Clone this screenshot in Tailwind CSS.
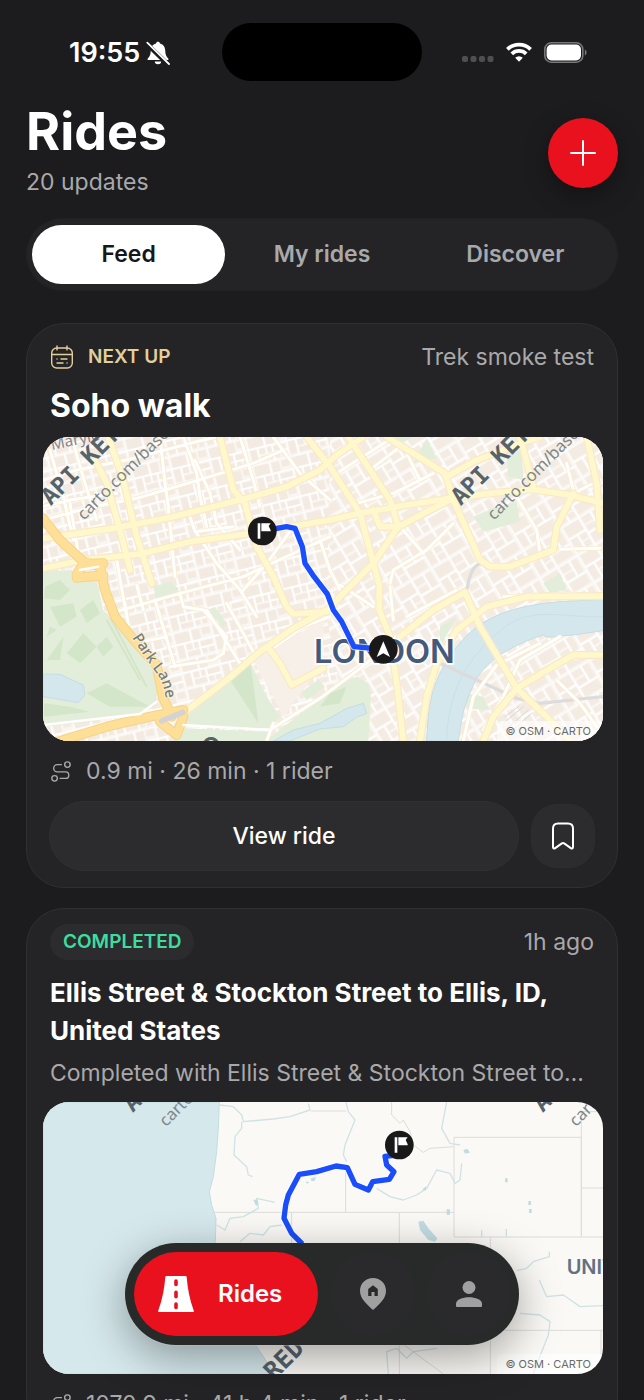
<!DOCTYPE html>
<html lang="en">
<head>
<meta charset="utf-8">
<meta name="viewport" content="width=device-width, initial-scale=1">
<title>Rides</title>
<script src="https://cdn.jsdelivr.net/npm/@tailwindcss/browser@4"></script>
</head>
<body class="bg-[#1c1c1e]">
<svg width="0" height="0" class="absolute" aria-hidden="true">
  <defs>
    <g id="flag-pin">
      <circle r="43" fill="#191919"/>
      <path d="M-14-23h8v46h-8zM-3-23H25l-6 8 6 13v3H-3z" fill="#fff"/>
    </g>
    <g id="watermark">
      <text transform="translate(32 229) rotate(-45)" font-family="DejaVu Sans Mono, monospace" font-weight="700" font-size="71" fill="#56636b">API KEY</text>
      <text transform="translate(132 272) rotate(-45)" font-family="Noto Sans, sans-serif" font-size="50" fill="#7d868b">carto.com/basemaps</text>
    </g>
    <symbol id="route" viewBox="0 0 24 24">
      <g fill="none" stroke="currentColor" stroke-width="1.5" stroke-linecap="round">
        <circle cx="19" cy="5" r="3"/><circle cx="5" cy="20" r="3"/>
        <path d="M12.500 5H8a4 4 0 0 0 0 8h9a3.500 3.500 0 0 1 0 7h-6"/>
      </g>
    </symbol>
  </defs>
</svg>

<div class="relative flex h-screen flex-col overflow-hidden bg-[#1c1c1e] font-['Inter',sans-serif] text-white">
  <!-- Status bar -->
  <div class="grid h-[102px] shrink-0 grid-cols-[1fr_200px_1fr] pt-[23px]">
    <div class="flex h-[60px] items-center gap-1.5 pl-[69px]">
      <span class="text-[27px] leading-8 font-semibold">19:55</span>
      <svg class="size-6 shrink-0" viewBox="0 0 24 24" fill="#fff" aria-label="Silent mode">
        <path d="M12 .8c1 0 1.800.7 2 1.600 3.500.8 5 3.600 5.200 7 .2 4 1 5.800 3 8 .6.800.3 1.600-.7 1.600H2.500c-1 0-1.300-.8-.7-1.600 2-2.200 2.800-4 3-8 .2-3.400 1.700-6.200 5.200-7 .2-.9 1-1.600 2-1.600z"/>
        <path d="M8.800 20.500h6.400a3.200 2.800 0 0 1-6.400 0z"/>
        <path d="M.5 2.500 22.500 24" stroke="#1c1c1e" stroke-width="4.500"/>
        <path d="M1.300 1.600 23 23" stroke="#fff" stroke-width="1.800" stroke-linecap="round"/>
      </svg>
    </div>
    <div class="h-[58px] rounded-full bg-black"></div>
    <div class="flex h-[58px] items-center justify-end pr-14">
      <svg class="mt-3.5 h-1.5 w-8" viewBox="0 0 32 6" fill="#4f4f51"><rect width="6" height="6" rx="2"/><rect x="8.500" width="6" height="6" rx="2"/><rect x="17" width="6" height="6" rx="2"/><rect x="25.500" width="6" height="6" rx="2"/></svg>
      <svg class="ml-3 h-5 w-[26px]" viewBox="0 0 26 20" fill="none" stroke="#fff" stroke-width="3.800">
        <path d="M1.400 7.300a16.500 16.500 0 0 1 23.200 0"/><path d="M5.800 11.800a10.300 10.300 0 0 1 14.400 0"/>
        <path d="M13 19.700l-3.800-4a5.500 5.500 0 0 1 7.600 0z" fill="#fff" stroke="none"/>
      </svg>
      <svg class="ml-3 h-[21px] w-11" viewBox="0 0 44 21">
        <rect x=".8" y=".8" width="38" height="19.400" rx="6.500" fill="none" stroke="#77777a" stroke-width="1.600"/>
        <rect x="2.600" y="2.600" width="34.400" height="15.800" rx="4.800" fill="#fff"/>
        <path d="M40.800 7.500c2.400.7 2.400 5.300 0 6z" fill="#77777a"/>
      </svg>
    </div>
  </div>

  <main class="flex flex-col px-[26px]">
    <header class="flex items-center justify-between">
      <div class="pb-2">
        <h1 class="text-[52px] leading-[60px] font-bold">Rides</h1>
        <p class="mt-1.5 text-[23px] leading-7 text-[#a9a9ab]">20 updates</p>
      </div>
      <button type="button" aria-label="New ride" class="flex size-[70px] items-center justify-center rounded-full bg-[#e8111d] shadow-[0_8px_24px_rgba(0,0,0,0.35)]">
        <svg class="size-7" viewBox="0 0 28 28" stroke="#fff" stroke-width="2" stroke-linecap="round"><path d="M14 2v24M2 14h24"/></svg>
      </button>
    </header>

    <div role="tablist" class="mt-3.5 grid h-[73px] grid-cols-3 rounded-full border border-[#222224] bg-[#242426] px-[5px] py-1.5 text-[23px] font-semibold text-[#a9a9ab]">
      <button type="button" role="tab" aria-selected="true" class="rounded-full bg-white text-[#171719]">Feed</button>
      <button type="button" role="tab" aria-selected="false">My rides</button>
      <button type="button" role="tab" aria-selected="false">Discover</button>
    </div>

    <div class="mt-8 flex flex-col gap-5">
      <article class="rounded-[38px] border border-[#303032] bg-[#242426] pt-[15px] pb-4">
        <div class="flex h-9 items-center px-[23px]">
          <svg class="size-6" viewBox="0 0 24 24" fill="none" stroke="#e3cf9d" stroke-width="1.400" stroke-linecap="round">
            <rect x="1.700" y="3" width="20.600" height="20" rx="5"/><path d="M7 .9v4M17 .9v4M1.700 9.500h20.600M7 14h.1M11 14h6M7 18h6M17 18h.1"/>
          </svg>
          <span class="ml-3.5 text-[19px] font-semibold text-[#e3cf9d]">NEXT UP</span>
          <span class="ml-auto text-[23px] text-[#a9a9ab]">Trek smoke test</span>
        </div>
        <h2 class="mt-[13px] px-[23px] text-[32px] leading-9 font-bold">Soho walk</h2>
        <div class="relative mt-[13px] mr-3.5 ml-4 h-[304px] overflow-hidden rounded-[26px] bg-[#f8f4ee]">
          <svg class="size-full" viewBox="9 21 1680 912" preserveAspectRatio="xMidYMid slice" role="img" aria-label="Map of the Soho walk route">
            <defs>
              <pattern id="blocks-a" width="118" height="86" patternUnits="userSpaceOnUse" patternTransform="rotate(-14)">
                <rect width="118" height="86" fill="#f9f6f1"/>
                <path d="M5 5h46v30H5zM58 5h24v32H58zM89 5h24v20H89zM5 42h20v38H5zM32 42h38v17H32zM32 66h38v14H32zM77 44h36v15H77zM77 66h14v14H77zM98 66h15v14H98z" fill="#f3eae1"/>
                <path d="M0 0h118M0 0v86M54 0v62M29 38v48M73 38v48M0 38h118M73 62h45" stroke="#fff" stroke-width="5"/>
              </pattern>
              <pattern id="blocks-b" width="132" height="96" patternUnits="userSpaceOnUse" patternTransform="rotate(-31)">
                <rect width="132" height="96" fill="#f9f6f1"/>
                <path d="M6 6h52v34H6zM67 6h30v20H67zM67 34h30v18H67zM105 6h20v46h-20zM6 48h22v42H6zM36 48h22v18H36zM36 73h22v17H36zM67 60h58v30H67z" fill="#f4ece3"/>
                <path d="M0 0h132M0 0v96M62 0v96M101 0v56M0 44h62M62 56h70M32 44v52" stroke="#fff" stroke-width="5"/>
              </pattern>
              <g id="streets">
                <path d="M9 150 110 120 260 90 450 40 530 21M9 270 140 235 290 205 460 155 640 100 730 60M9 230 90 210 230 190M360 21 375 160 385 230 405 440M430 21 470 130 480 200 500 290M465 90 510 190 530 280 600 360M90 220 120 400M30 60 70 200 100 330M100 40 135 160 170 270M600 21 640 150 660 230M700 21 780 130 870 210M450 260 465 305 580 290M470 310 530 400 600 480 650 560M255 520 270 620M230 390 260 560M220 547 420 490 610 440 760 370 870 320M345 510 375 610 405 710M420 490 430 530 490 540 560 620 550 670 520 690 390 710M500 540 600 700M560 520 640 665M610 480 680 400 760 290M290 465 310 540M280 640 380 620"/>
                <path d="M840 330 870 420 900 480M950 220 1060 190 1180 130M890 130 1000 60 1060 21M990 120 1080 50M1100 70 1140 150M1080 290 1150 370M1050 460 1060 420 1160 360 1240 280M970 100 1050 200M1430 200 1490 300 1500 370M1560 358 1680 355M1580 100 1600 180M1600 190 1680 150M900 465 1000 530M1050 470 1060 570M1100 560 1250 480M1390 500 1600 490M1330 900 1390 800 1440 690 1560 620M1440 760 1560 690 1640 680M1550 750 1620 820 1670 890M690 900 840 805 980 700 1090 600M680 933 700 880M690 660 790 590 870 560M1270 933 1300 800 1370 705 1500 640"/>
              </g>
              <g id="avenues">
                <path d="M9 415 130 390 300 372 450 335 620 312 870 270 960 250 1100 225 1230 205 1350 190 1480 178 1590 195 1689 220"/>
                <path d="M9 325 220 295 380 265 460 245 620 205 740 170 840 120 890 75 970 21"/>
                <path d="M165 90 200 160 240 300 270 420M205 21 250 150 290 320 335 460M540 21 560 100 580 180 615 220 650 350 700 440 740 530 760 552 860 545M800 21 870 110 960 250 1000 400 1018 465 1018 540 1050 620 1070 760 1090 933"/>
                <path d="M430 850 560 750 660 665 760 595 870 535 900 500 1000 400 1075 290 1180 235 1240 205M925 21 1010 150 1050 210 1075 290 1020 290 1000 240M690 660 720 700 755 765 850 715M1040 21 1120 70 1215 130 1240 210 1320 390 1350 410 1410 410 1540 360 1550 290 1600 190M1220 140 1300 95 1440 40 1500 21M1440 21 1480 170M1640 21 1670 160 1680 300"/>
                <path d="M1140 933 1160 800 1190 700 1250 600 1340 530 1460 500 1689 498M1080 620 1180 540 1275 487 1320 590 1430 775 1520 860 1590 933M1430 775 1530 715 1600 675 1689 675M1430 775 1360 860 1330 933"/>
              </g>
              <g id="parklane">
                <path d="M9 265 60 330 130 395 180 410 195 480 225 560 290 640 350 705 368 800 395 860M60 933 200 890 330 860 430 840M110 433 130 402 190 400M110 443 190 436M360 875 410 915 430 860"/>
              </g>
            </defs>
            <path d="M9 21h1680v912H9z" fill="url(#blocks-a)"/>
            <path d="M870 21h819v912H930L860 560z" fill="url(#blocks-b)"/>
            <path d="M640 690 680 665 850 570 850 700 730 860z" fill="#f6f0e9"/>
            <!-- Parks -->
            <g fill="#e2eed9">
              <path d="M9 425 95 420 110 445 170 450 190 540 230 590 290 640 345 710 352 790 345 830 300 850 150 875 9 890z"/>
              <path d="M430 850 500 795 630 695 680 800 720 860 690 895 430 885zM430 895 690 905 690 933 400 933z"/>
              <path d="M670 933 720 900 840 805 900 762 950 740 985 760 993 800 985 933z"/>
              <path d="M1060 21h60l-40 20zM1120 100l40-75 30 60zM1300 260l60-25 70-20 10 60-110 30zM1400 80l45-20 5 90-45-10zM340 470l50-15 25 20-15 30-50 5zM505 540l20-10 35 50-10 15zM220 285l50-15v25l-45 8zM785 785l50-35 20 20-55 40zM1280 790l50 10 20 40-70-5zM1510 460l50-30 20 50-50 10zM1200 590l50-30-50 90z"/>
            </g>
            <g fill="#d4e6c9">
              <path d="M15 470 60 450 90 480 60 510 12 505zM30 530 100 520 110 560 60 590zM120 540 160 510 180 550 140 580zM80 670 130 610 170 650 120 700zM170 650 200 620 220 650 190 680zM20 690 70 620 60 690zM140 790 200 760 330 830 210 830zM12 820 90 830 150 845 12 860zM570 750 630 690 640 760 655 880zM840 830 870 790 920 770 900 820zM30 590 50 600 20 620z"/>
              <path d="M200 570 300 750M210 560 320 770" stroke="#d4e6c9" stroke-width="6"/>
            </g>
            <!-- Water -->
            <g fill="#d3e7ec" stroke="#c5dde4" stroke-width="3">
              <path d="M9 732 60 733 130 765 135 795 115 818 9 800z"/>
              <path d="M700 933 760 900 840 880 920 835 970 820 980 850 950 862 910 890 840 897 750 933z"/>
              <path d="M1160 933C1165 800 1180 750 1240 665S1380 530 1560 515L1689 508V602L1600 615 1520 622 1510 615C1400 650 1330 700 1300 765S1265 860 1255 933z"/>
            </g>
            <path d="M1220 933C1225 790 1270 700 1370 610S1560 565 1689 560" fill="none" stroke="#c5dce4" stroke-width="2"/>
            <g fill="none" stroke-linejoin="round" stroke-linecap="round">
              <path d="M1200 700 1310 750 1430 805 1500 820 1689 800M1280 480C1290 430 1300 400 1330 400" stroke="#dcdcdc" stroke-width="10"/>
              <use href="#streets" stroke="#fbeac9" stroke-width="13"/>
              <use href="#streets" stroke="#fff" stroke-width="9"/>
              <use href="#avenues" stroke="#fbe8c6" stroke-width="24"/>
              <use href="#avenues" stroke="#fff8cd" stroke-width="17"/>
              <use href="#parklane" stroke="#f8d287" stroke-width="30"/>
              <use href="#parklane" stroke="#fddf98" stroke-width="24"/>
              <path d="M365 873 428 847" stroke="#d3d3d3" stroke-width="17"/>
              <path d="M120 420 175 410M9 885 300 852 350 815M430 885 690 900" stroke="#fff" stroke-width="7"/>
              <path d="M1395 860l40-30M1390 880l60-50M1395 900l70-60M1400 915l75-65" stroke="#d8d8d8" stroke-width="3"/>
            </g>
            <!-- Place names -->
            <g font-family="Noto Sans, sans-serif">
              <text transform="translate(36 60) rotate(-12)" font-size="46" fill="#85868a">Maryle</text>
              <path id="pl-curve" d="M276 622Q325 700 350 730T384 850" fill="none"/>
              <text font-size="45" font-weight="500" fill="#727e84" stroke="#fdeecb" stroke-width="6" paint-order="stroke"><textPath href="#pl-curve">Park Lane</textPath></text>
            </g>
            <use href="#watermark"/>
            <use href="#watermark" x="1230"/>
            <text x="484" y="978" font-family="Inter, sans-serif" font-weight="600" font-size="76" fill="#56636b">O</text>
            <text x="822" y="698" font-family="Inter, sans-serif" font-weight="600" font-size="98" fill="#455a7a" stroke="#fff" stroke-width="10" paint-order="stroke">LONDON</text>
            <path d="M667 303 740 290 765 295 787 350 795 400 822 440 862 492 880 540 905 575 942 650 1030 658" fill="none" stroke="#fff" stroke-opacity=".7" stroke-width="22" stroke-linejoin="round"/>
            <path d="M667 303 740 290 765 295 787 350 795 400 822 440 862 492 880 540 905 575 942 650 1030 658" fill="none" stroke="#1a4dfb" stroke-width="16" stroke-linejoin="round"/>
            <use href="#flag-pin" x="667" y="303"/>
            <circle cx="1030" cy="658" r="43" fill="#191919"/>
            <path d="M1030 634 1050 681 1030 670 1010 681z" fill="#fff"/>
          </svg>
          <a href="#" class="absolute right-0 bottom-0 rounded-tl-md bg-white/60 pr-3 pl-2 text-[11px] leading-5 text-[#6b6b6b]">© OSM · CARTO</a>
        </div>
        <p class="mt-4 flex h-7 items-center px-[23px] text-[23px] text-[#a9a9ab]">
          <svg class="mr-3.5 size-[22px]"><use href="#route"/></svg>0.9 mi · 26 min · 1 rider
        </p>
        <div class="mt-4 flex items-center gap-3 px-[22px]">
          <button type="button" class="h-[70px] flex-1 rounded-full border border-[#303032] bg-[#2c2c2e] text-[23px] font-medium">View ride</button>
          <button type="button" aria-label="Save ride" class="flex size-16 items-center justify-center rounded-[26px] border border-[#2e2e30] bg-[#2c2c2e]">
            <svg class="h-7 w-6" viewBox="0 0 24 28" fill="none" stroke="#fff" stroke-width="2" stroke-linejoin="round"><path d="M2 6.500C2 3 3.500 1.500 7 1.500h10c3.500 0 5 1.500 5 5V25c0 1.500-1 2-2.200 1.100L13.500 21.600q-1.500-1-3 0L4.200 26.100C3 27 2 26.500 2 25z"/></svg>
          </button>
        </div>
      </article>

      <article class="rounded-[38px] border border-[#303032] bg-[#242426] pt-[15px] pb-4">
        <div class="flex h-9 items-center justify-between px-[23px]">
          <span class="flex h-9 items-center rounded-full bg-[#2c2c2e] px-[13px] text-[19px] font-semibold text-[#3ddda0]">COMPLETED</span>
          <span class="text-[23px] text-[#a9a9ab]">1h ago</span>
        </div>
        <h2 class="mt-3.5 px-[23px] text-[26px] leading-[38px] font-bold">Ellis Street &amp; Stockton Street to Ellis, ID, United States</h2>
        <p class="mt-2 truncate px-[23px] text-[23px] leading-[30px] text-[#a9a9ab]">Completed with Ellis Street &amp; Stockton Street to…</p>
        <div class="relative mt-3.5 mr-3.5 ml-4 h-[272px] overflow-hidden rounded-[26px] bg-[#fbf9f5]">
          <svg class="size-full" viewBox="39 21 1680 816" preserveAspectRatio="xMidYMid slice" role="img" aria-label="Map of the completed route">
            <path d="M39 21H568L565 100 560 170 550 245 538 290 545 330 558 370 556 440 550 460 575 560 620 660 680 755 710 800 735 837H39z" fill="#d5e8ec" stroke="#c3dce2" stroke-width="3"/>
            <g fill="none" stroke="#dedbdb" stroke-width="3">
              <path d="M555 352H1272M843 48H948M785 352V500L1240 837M947 220V352M1108 352V837M1272 127H1654V426H1272zM1654 50V426H1719M1654 279H1719M1654 50H1719M1381 426V837M1381 706H1719M1713 706V837M1085 21V60L1110 85 1120 75 1140 110 1150 150 1170 165 1180 172 1200 160 1272 155"/>
            </g>
            <g fill="none" stroke="#cfe3e6" stroke-width="4" stroke-linejoin="round">
              <path d="M568 30 610 35 635 60 640 80 730 72 780 65 840 45 835 25M635 80 635 100 615 125 612 180 650 215 655 240 668 245M735 322 680 310 685 340 640 365 600 370 585 405 560 390M630 440 660 415 700 420 720 395 755 390M948 21 955 50 975 75 945 150 940 180 950 200M1040 280 1080 305 1120 315 1160 300 1190 280 1220 225 1260 235 1275 265 1290 255 1295 205M1250 21 1235 100 1260 145 1290 150M1355 405V426M1429 402V426"/>
              <path d="M1460 527 1490 520 1510 500 1558 485V470M1528 555 1550 605 1600 600 1650 635 1719 632M1470 655 1530 660 1560 680 1555 720 1535 770 1520 810 1510 837M1075 837 1070 770 1100 760 1130 790 1150 770 1220 760"/>
            </g>
            <path d="M1165 380 1180 377 1195 400 1222 430 1215 440 1195 435 1170 405zM1250 343h10v16h-10zM1300 165l12-4 8 12-15 3zM1425 250h8v12h-8zM1495 318h8v12h-8zM1497 342h8v12h-8zM1177 283l12-10-2 14zM842 250l16-4-4 12h-10zM828 260h8v5h-8zM670 315l12-2 4 14-8 6z" fill="#c2dde2"/>
            <use href="#watermark" x="276" y="-175"/>
            <use href="#watermark" x="1506" y="-175"/>
            <text transform="translate(732 858) rotate(-45)" font-family="DejaVu Sans Mono, monospace" font-weight="700" font-size="74" fill="#56636b">RED</text>
            <text x="1610" y="536" font-family="Inter, sans-serif" font-weight="600" font-size="60" fill="#627184">UNITED</text>
            <path d="M817 447 785 415 762 370 767 330 775 300 808 238 860 230 918 213 952 218 975 268 1015 285 1028 260 1078 253 1092 230 1070 210 1065 184 1100 180" fill="none" stroke="#fff" stroke-opacity=".8" stroke-width="22" stroke-linejoin="round"/>
            <path d="M817 447 785 415 762 370 767 330 775 300 808 238 860 230 918 213 952 218 975 268 1015 285 1028 260 1078 253 1092 230 1070 210 1065 184 1100 180" fill="none" stroke="#1a4dfb" stroke-width="16" stroke-linejoin="round"/>
            <use href="#flag-pin" x="1108" y="150"/>
          </svg>
          <a href="#" class="absolute right-0 bottom-0 rounded-tl-md bg-white/60 pr-3 pl-2 text-[11px] leading-5 text-[#6b6b6b]">© OSM · CARTO</a>
        </div>
        <p class="mt-4 flex h-7 items-center px-[23px] text-[23px] text-[#a9a9ab]">
          <svg class="mr-3.5 size-[22px]"><use href="#route"/></svg>1070.9 mi · 41 h 4 min · 1 rider
        </p>
      </article>
    </div>
  </main>

  <!-- Floating tab bar -->
  <nav class="absolute bottom-[55px] left-1/2 flex h-[102px] -translate-x-1/2 items-stretch gap-[13px] rounded-full bg-[#282a2a] p-[9px] shadow-[0_12px_44px_rgba(0,0,0,0.36),0_1px_1px_rgba(255,255,255,0.5)]">
    <a href="#" aria-current="page" class="flex w-[184px] items-center rounded-full bg-[#e8111d] pl-6">
      <svg class="size-9" viewBox="0 0 36 36"><path d="M8.500 0h19q1 0 1.200 1C29.500 12 31.500 23 35.700 34.500q.5 1.500-1 1.500H1.300q-1.500 0-1-1.500C4.500 23 6.500 12 7.300 1q.2-1 1.200-1z" fill="#fff"/><path d="M18 5v3.500M18 16.300v4.400M18 28v3.500" stroke="#e8111d" stroke-width="3.600" stroke-linecap="round"/></svg>
      <span class="ml-6 text-[24px] font-semibold">Rides</span>
    </a>
    <a href="#" aria-label="Places" class="flex w-[83px] items-center justify-center rounded-full bg-[#2a2a2c]">
      <svg class="h-8 w-[26px]" viewBox="0 0 26 32"><path d="M13 0C5.500 0 0 5.500 0 12.800 0 21 7 26.500 13 32c6-5.500 13-11 13-19.200C26 5.500 20.500 0 13 0z" fill="#a0a0a1"/><path d="M13 7.300 17.800 11v7h-3.300v-4h-3v4H8.200v-7z" fill="#2a2a2c"/></svg>
    </a>
    <a href="#" aria-label="Profile" class="flex w-[83px] items-center justify-center rounded-full bg-[#2a2a2c]">
      <svg class="size-[26px]" viewBox="0 0 26 26" fill="#a0a0a1"><circle cx="13" cy="6.500" r="6.500"/><path d="M0 22.700C0 18.500 6.500 16.300 13 16.300s13 2.200 13 6.400V25q0 1-1 1H1q-1 0-1-1z"/></svg>
    </a>
  </nav>
</div>
</body>
</html>
